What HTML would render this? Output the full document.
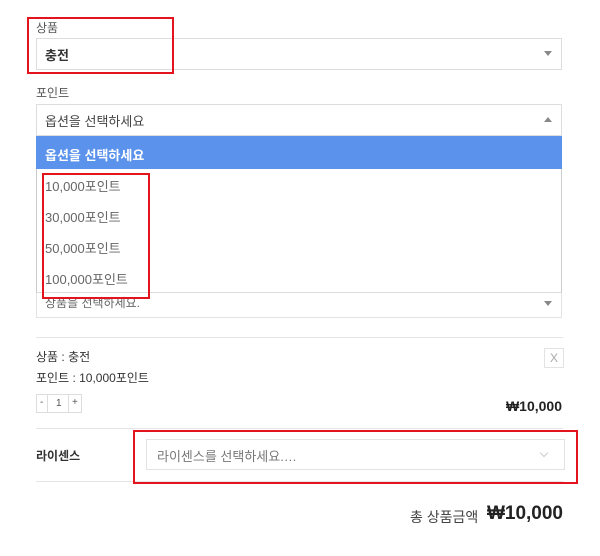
<!DOCTYPE html>
<html><head><meta charset="utf-8"><style>
body{margin:0;width:600px;height:556px;background:#fff;font-family:"Liberation Sans","Noto Sans CJK KR",sans-serif;position:relative;overflow:hidden;color:#333}
.a{position:absolute}
.sel{position:absolute;left:36px;width:526px;border:1px solid #ddd;background:#fff;box-sizing:border-box}
.red{position:absolute;border:2px solid #e3141b;box-sizing:border-box}
.tri{position:absolute;width:0;height:0;border-left:4px solid transparent;border-right:4px solid transparent}
</style></head><body>
<div class="a" style="left:36px;top:19px;font-size:12px;color:#555">상품</div>
<div class="sel" style="top:38px;height:32px"></div>
<div class="a" style="left:45px;top:45px;font-size:13px;font-weight:bold;color:#333">충전</div>
<div class="tri" style="left:544px;top:51px;border-top:5px solid #888"></div>
<div class="a" style="left:36px;top:84px;font-size:12px;color:#555">포인트</div>
<div class="sel" style="top:104px;height:32px"></div>
<div class="a" style="left:45px;top:111px;font-size:13px;color:#444">옵션을 선택하세요</div>
<div class="tri" style="left:544px;top:117px;border-bottom:5px solid #888"></div>
<div class="sel" style="top:287px;height:31px;border-color:#e3e3e3"></div>
<div class="a" style="left:45px;top:294px;font-size:12px;color:#666">상품을 선택하세요.</div>
<div class="tri" style="left:544px;top:301px;border-top:5px solid #888"></div>
<div class="a" style="left:36px;top:136px;width:526px;height:157px;background:#fff;border-left:1px solid #ccc;border-right:1px solid #ccc;border-bottom:1px solid #ddd;box-sizing:border-box"></div>
<div class="a" style="left:36px;top:136px;width:526px;height:33px;background:#5b93ec"></div>
<div class="a" style="left:45px;top:145px;font-size:13px;font-weight:bold;color:#fff">옵션을 선택하세요</div>
<div class="a" style="left:45px;top:176px;font-size:13px;color:#666">10,000포인트</div>
<div class="a" style="left:45px;top:207px;font-size:13px;color:#666">30,000포인트</div>
<div class="a" style="left:45px;top:238px;font-size:13px;color:#666">50,000포인트</div>
<div class="a" style="left:45px;top:269px;font-size:13px;color:#666">100,000포인트</div>
<div class="red" style="left:27px;top:17px;width:147px;height:57px"></div>
<div class="red" style="left:42px;top:173px;width:108px;height:126px"></div>
<div class="a" style="left:36px;top:337px;width:527px;height:1px;background:#e5e5e5"></div>
<div class="a" style="left:36px;top:348px;font-size:12px;color:#333">상품 : 충전</div>
<div class="a" style="left:36px;top:369px;font-size:12px;color:#333">포인트 : 10,000포인트</div>
<div class="a" style="left:544px;top:348px;width:20px;height:20px;border:1px solid #e3e3e3;box-sizing:border-box;font-size:12px;color:#aaa;text-align:center;line-height:18px">X</div>
<div class="a" style="left:36px;top:394px;width:46px;height:19px;border:1px solid #ddd;box-sizing:border-box;font-size:10px;color:#555">
<span class="a" style="left:3px;top:2px">-</span><span class="a" style="left:10px;top:0;width:1px;height:17px;background:#ddd"></span><span class="a" style="left:19px;top:3px">1</span><span class="a" style="left:31px;top:0;width:1px;height:17px;background:#ddd"></span><span class="a" style="left:35px;top:2px">+</span></div>
<div class="a" style="right:38px;top:398px;font-size:14px;font-weight:bold;color:#222">₩10,000</div>
<div class="a" style="left:36px;top:428px;width:527px;height:1px;background:#e5e5e5"></div>
<div class="a" style="left:36px;top:447px;font-size:12px;font-weight:bold;color:#333">라이센스</div>
<div class="a" style="left:146px;top:439px;width:419px;height:31px;border:1px solid #e3e3e3;box-sizing:border-box"></div>
<div class="a" style="left:157px;top:446px;font-size:13px;color:#777">라이센스를 선택하세요.…</div>
<div class="a" style="left:541px;top:450px;width:5px;height:5px;border-right:1px solid #ccc;border-bottom:1px solid #ccc;transform:rotate(45deg)"></div>
<div class="a" style="left:36px;top:481px;width:527px;height:1px;background:#e5e5e5"></div>
<div class="red" style="left:133px;top:430px;width:445px;height:54px"></div>
<div class="a" style="left:410px;top:507px;font-size:14px;color:#444">총 상품금액</div>
<div class="a" style="right:37px;top:503px;font-size:19px;font-weight:bold;color:#222">₩10,000</div>
</body></html>
